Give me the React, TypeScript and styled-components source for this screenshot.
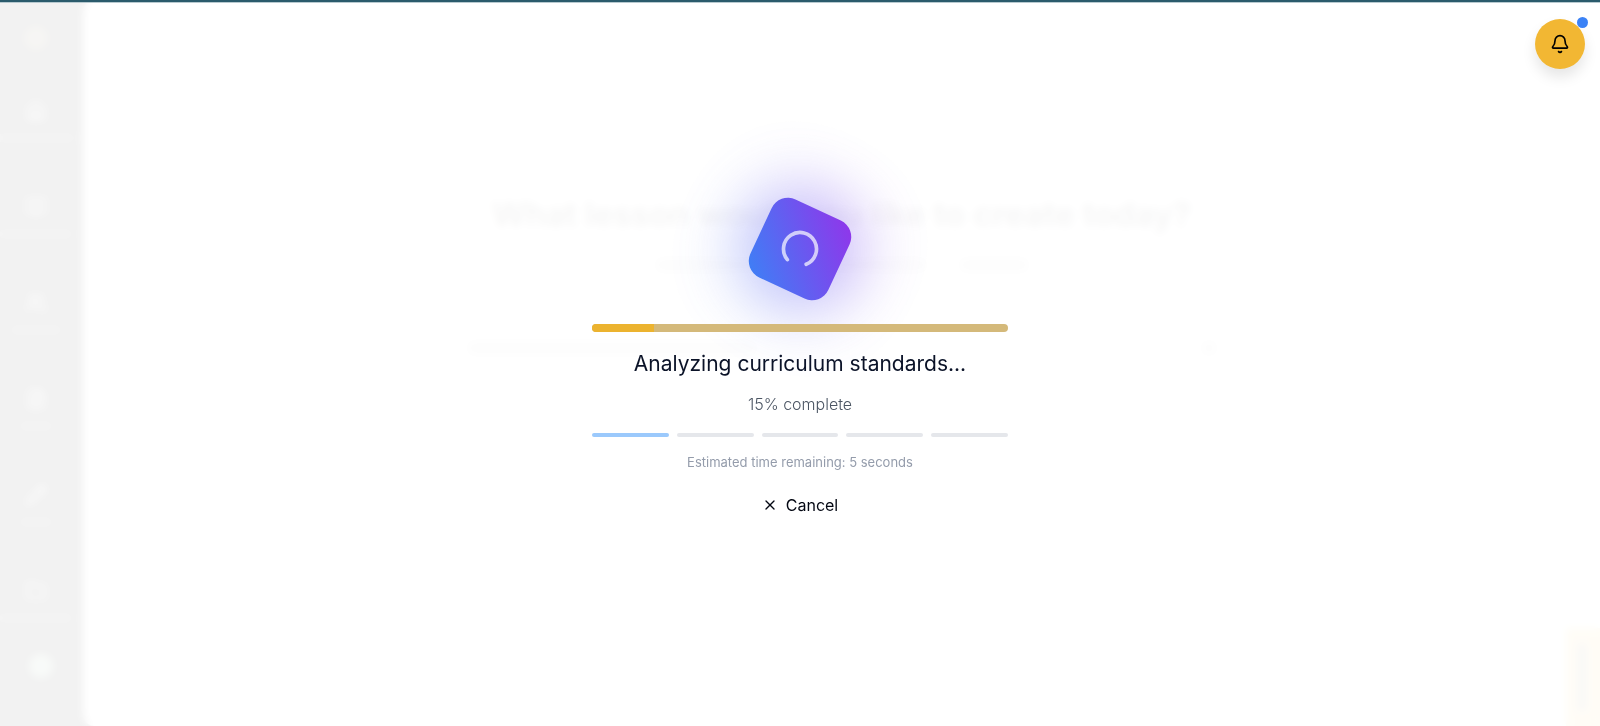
import React from "react";
import styled, { createGlobalStyle } from "styled-components";
import { Bell, LoaderCircle, X, Home, BookOpen, Users, FileText, Pencil, Folder } from "lucide-react";

const GlobalStyle = createGlobalStyle`
  *, *::before, *::after { box-sizing: border-box; }
  html, body, #root { height: 100%; }
  body {
    margin: 0;
    overflow: hidden;
    background: #fff;
    color: #030712;
    font-family: Inter, "Open Sans", sans-serif;
  }
`;

const Shell = styled.div`
  min-height: 100vh;
  display: flex;
  background: #000;
`;

const Sidebar = styled.nav`
  width: 83px;
  flex: none;
  display: flex;
  flex-direction: column;
  align-items: center;
  padding: 26px 12px 0 0;
`;

const Logo = styled.div`
  width: 24px;
  height: 24px;
  margin-bottom: 50px;
  border-radius: 50%;
  background: #57482a;
`;

const NavItem = styled.div`
  height: 96px;
  display: flex;
  flex-direction: column;
  align-items: center;
  gap: 12px;
  color: #ddd;
`;

const NavLabel = styled.span<{ $width: number }>`
  width: ${(p) => p.$width}px;
  height: 8px;
  border-radius: 3px;
  background: #333;
`;

const Avatar = styled.div`
  width: 24px;
  height: 24px;
  margin: -22px 0 0 10px;
  border-radius: 50%;
  background: #7fa588;
`;

const Workspace = styled.main`
  flex: 1;
  display: flex;
  flex-direction: column;
  align-items: center;
  padding-top: 192px;
  border-radius: 12px 0 0 12px;
  background: #fff;
`;

const Question = styled.h1`
  margin: 0;
  font-size: 33px;
  line-height: 44px;
  font-weight: 600;
  color: #444;
`;

const Chips = styled.div`
  display: flex;
  gap: 32px;
  margin-top: 22px;
`;

const Chip = styled.span<{ $width: number }>`
  width: ${(p) => p.$width}px;
  height: 14px;
  border-radius: 7px;
  background: #ccc;
`;

const PromptRow = styled.div`
  width: 750px;
  margin-top: 69px;
  display: flex;
  justify-content: space-between;
`;

const FeedbackTab = styled.div`
  position: fixed;
  right: 0;
  bottom: 0;
  width: 34px;
  height: 98px;
  padding: 16px 12px;
  background: #f7c95a;

  &::after {
    content: "";
    display: block;
    width: 8px;
    height: 100%;
    background: #777;
  }
`;

const Overlay = styled.div`
  position: fixed;
  inset: 0;
  display: flex;
  justify-content: center;
  align-items: center;
  padding-top: 4px;
  background: rgba(255, 255, 255, 0.95);
  backdrop-filter: blur(4px);
`;

const TopLine = styled.div`
  position: fixed;
  inset: 0 0 auto;
  height: 3px;
  background: #2b5b6c;
  border-bottom: 1px solid #b8cad0;
`;

const Panel = styled.section`
  width: 100%;
  max-width: 448px;
  padding: 0 16px;
  display: flex;
  flex-direction: column;
  align-items: center;
`;

const Emblem = styled.div`
  position: relative;
  width: 86px;
  height: 86px;
  margin-bottom: 32px;
  display: grid;
  place-items: center;
`;

const Tile = styled.div`
  position: absolute;
  inset: 0;
  border-radius: 18px;
  background: linear-gradient(45deg, #3b82f6, #9333ea);
  transform: rotate(25deg);
`;

const Glow = styled(Tile)`
  inset: -20px;
  border-radius: 50%;
  filter: blur(32px);
  opacity: 0.4;
`;

const Spinner = styled(LoaderCircle)`
  position: relative;
  color: #fff;
  opacity: 0.7;
  transform: rotate(140deg);
`;

const Progress = styled.div`
  position: relative;
  width: 100%;
  height: 8px;
  border-radius: 4px;
  overflow: hidden;
  background: #d4b97a;
`;

const ProgressFill = styled.div`
  height: 100%;
  background: #ecb32f;
`;

const Status = styled.h2`
  margin: 18px 0 0;
  font-size: 21px;
  line-height: 28px;
  font-weight: 400;
  color: #0b1328;
`;

const Percent = styled.p`
  margin: 14px 0 0;
  font-size: 16px;
  line-height: 24px;
  font-weight: 300;
  color: #4b5563;
`;

const Steps = styled.div`
  width: 100%;
  display: flex;
  gap: 8px;
  margin-top: 17px;
`;

const Step = styled.span<{ $active: boolean }>`
  flex: 1;
  height: 4px;
  border-radius: 2px;
  background: ${(p) => (p.$active ? "#9bc9fc" : "#e5e7eb")};
`;

const Estimate = styled.p`
  margin: 15px 0 0;
  font-size: 13px;
  line-height: 20px;
  font-weight: 400;
  color: #949cab;
`;

const CancelButton = styled.button`
  display: flex;
  align-items: center;
  gap: 8px;
  height: 40px;
  margin-top: 13px;
  padding: 0 16px;
  border: 0;
  background: transparent;
  color: #030712;
  font: inherit;
  font-size: 16px;
  line-height: 24px;
  cursor: pointer;
`;

const Notifications = styled.button`
  position: fixed;
  top: 19px;
  right: 15px;
  width: 50px;
  height: 50px;
  padding: 0;
  display: grid;
  place-items: center;
  border: 0;
  border-radius: 50%;
  background: #f2b733;
  color: #000;
  box-shadow: 0 8px 14px rgba(0, 0, 0, 0.1);
  cursor: pointer;

  &::after {
    content: "";
    position: absolute;
    top: -2px;
    right: -3px;
    width: 11px;
    height: 11px;
    border-radius: 50%;
    background: #3b82f6;
  }
`;

const navItems = [
  { Icon: Home, width: 76 },
  { Icon: BookOpen, width: 72 },
  { Icon: Users, width: 50 },
  { Icon: FileText, width: 32 },
  { Icon: Pencil, width: 32 },
  { Icon: Folder, width: 72 },
];

const progress = 15;
const steps = [0, 1, 2, 3, 4];

export default function App() {
  return (
    <>
      <GlobalStyle />
      <Shell aria-hidden="true">
        <Sidebar>
          <Logo />
          {navItems.map(({ Icon, width }, i) => (
            <NavItem key={i}>
              <Icon size={22} />
              <NavLabel $width={width} />
            </NavItem>
          ))}
          <Avatar />
        </Sidebar>
        <Workspace>
          <Question>What lesson would you like to create today?</Question>
          <Chips>
            <Chip $width={110} />
            <Chip $width={130} />
            <Chip $width={70} />
          </Chips>
          <PromptRow>
            <Chip $width={290} />
            <Chip $width={16} />
          </PromptRow>
        </Workspace>
        <FeedbackTab />
      </Shell>
      <Overlay role="dialog" aria-label="Creating lesson">
        <Panel>
          <Emblem>
            <Glow />
            <Tile />
            <Spinner size={44} />
          </Emblem>
          <Progress role="progressbar" aria-label="Lesson progress" aria-valuenow={progress} aria-valuemin={0} aria-valuemax={100}>
            <ProgressFill style={{ width: `${progress}%` }} />
          </Progress>
          <Status>Analyzing curriculum standards...</Status>
          <Percent>{progress}% complete</Percent>
          <Steps>
            {steps.map((step) => (
              <Step key={step} $active={step === 0} />
            ))}
          </Steps>
          <Estimate>Estimated time remaining: 5 seconds</Estimate>
          <CancelButton type="button">
            <X size={16} strokeWidth={2} />
            Cancel
          </CancelButton>
        </Panel>
      </Overlay>
      <TopLine />
      <Notifications type="button" aria-label="Notifications">
        <Bell size={20} />
      </Notifications>
    </>
  );
}
